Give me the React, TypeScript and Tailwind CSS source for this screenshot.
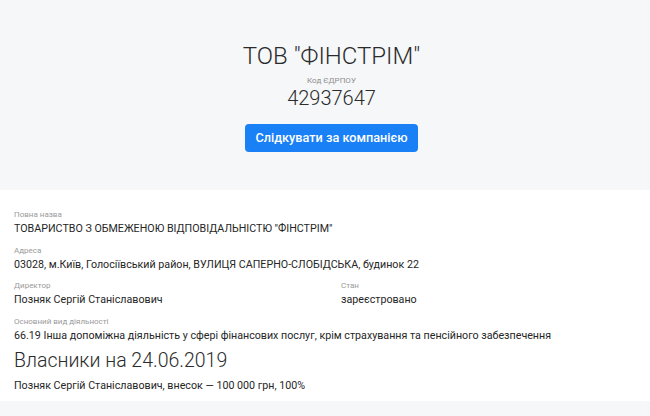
import React from "react";

const font = { fontFamily: "Roboto, 'Noto Sans', sans-serif" };

function Field({ label, value }: { label: string; value: string }) {
  return (
    <div className="flex flex-col">
      <div className="text-[8px] leading-[12px] text-[#9a9a9a]">{label}</div>
      <div className="text-[10.7px] leading-[16px] text-[#262626]">{value}</div>
    </div>
  );
}

export default function App() {
  return (
    <div className="w-[650px] h-[416px] bg-[#f6f7f9] overflow-hidden" style={font}>
      <div className="flex flex-col items-center pt-[40px] pl-[13px] h-[190px]">
        <div className="text-[24px] leading-[32px] text-[#2b2b2b] font-light">ТОВ "ФІНСТРІМ"</div>
        <div className="text-[8px] leading-[10px] text-[#8f8f8f] mt-[4px]">Код ЄДРПОУ</div>
        <div className="text-[20px] leading-[24px] text-[#2b2b2b] font-light">42937647</div>
        <button className="mt-[14px] w-[173px] h-[28px] rounded-[4px] bg-[#1a80f6] text-white text-[12.7px] font-medium">
          Слідкувати за компанією
        </button>
      </div>
      <div className="bg-white h-[211px] px-[14px] pt-[19px] flex flex-col gap-[7.5px]">
        <Field label="Повна назва" value={'ТОВАРИСТВО З ОБМЕЖЕНОЮ ВІДПОВІДАЛЬНІСТЮ "ФІНСТРІМ"'} />
        <Field label="Адреса" value="03028, м.Київ, Голосіївський район, ВУЛИЦЯ САПЕРНО-СЛОБІДСЬКА, будинок 22" />
        <div className="grid grid-cols-[327px_1fr]">
          <Field label="Директор" value="Позняк Сергій Станіславович" />
          <Field label="Стан" value="зареєстровано" />
        </div>
        <Field label="Основний вид діяльності" value="66.19 Інша допоміжна діяльність у сфері фінансових послуг, крім страхування та пенсійного забезпечення" />
        <div className="text-[19.5px] leading-[26px] text-[#2b2b2b] font-light -mt-[3px]">Власники на 24.06.2019</div>
        <div className="text-[10.7px] leading-[14px] text-[#262626] -mt-[3px]">Позняк Сергій Станіславович, внесок — 100 000 грн, 100%</div>
      </div>
    </div>
  );
}
